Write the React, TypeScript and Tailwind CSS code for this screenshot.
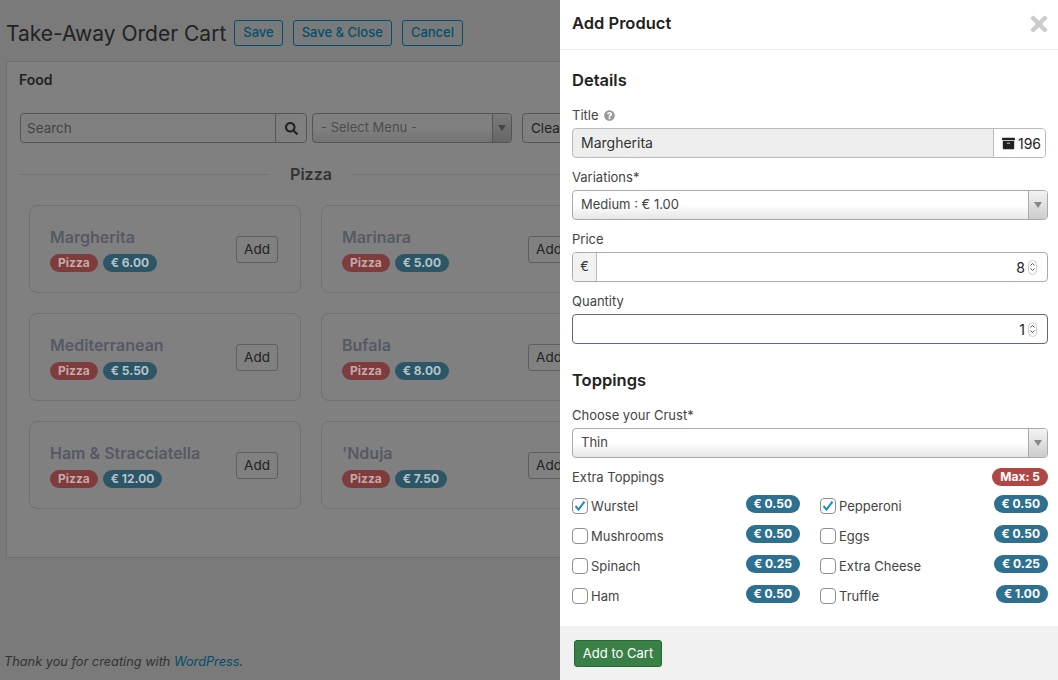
import { FaArchive, FaQuestionCircle, FaSearch, FaTimes } from "react-icons/fa";

const products = [
  { name: "Margherita", price: "€ 6.00" },
  { name: "Marinara", price: "€ 5.00" },
  { name: "Mediterranean", price: "€ 5.50" },
  { name: "Bufala", price: "€ 8.00" },
  { name: "Ham & Stracciatella", price: "€ 12.00" },
  { name: "'Nduja", price: "€ 7.50" },
];

const toppings = [
  { name: "Wurstel", price: "€ 0.50", checked: true },
  { name: "Pepperoni", price: "€ 0.50", checked: true },
  { name: "Mushrooms", price: "€ 0.50" },
  { name: "Eggs", price: "€ 0.50" },
  { name: "Spinach", price: "€ 0.25" },
  { name: "Extra Cheese", price: "€ 0.25" },
  { name: "Ham", price: "€ 0.50" },
  { name: "Truffle", price: "€ 1.00" },
];

function Badge({ color, children }: { color: string; children: React.ReactNode }) {
  return (
    <span className={`flex h-[18px] items-center rounded-full px-[8px] text-[12px] font-bold leading-none text-white ${color}`}>
      {children}
    </span>
  );
}

function SelectBox({ value }: { value: string }) {
  return (
    <div className="flex h-[30px] w-full items-stretch overflow-hidden rounded-[4px] border border-[#aaaaaa] bg-gradient-to-b from-white from-50% to-[#e6e6e6]">
      <span className="flex-1 self-center pl-[8px] text-[13px] text-[#444444]">{value}</span>
      <span className="flex w-[19px] items-center justify-center border-l border-[#aaaaaa] bg-gradient-to-b from-[#f4f4f4] to-[#cccccc]">
        <svg width="8" height="6" viewBox="0 0 8 6">
          <path d="M0 0h8L4 6z" fill="#888888" />
        </svg>
      </span>
    </div>
  );
}

function Spinner() {
  return (
    <span className="ml-[3px] flex h-[15px] w-[9px] flex-col items-center justify-center gap-[2px] rounded-full border border-[#cccccc]">
      <svg width="5" height="3" viewBox="0 0 5 3">
        <path d="M.5 2.5l2-2 2 2" fill="none" stroke="#555555" />
      </svg>
      <svg width="5" height="3" viewBox="0 0 5 3">
        <path d="M.5.5l2 2 2-2" fill="none" stroke="#555555" />
      </svg>
    </span>
  );
}

function Field({ label, children, className }: { label: React.ReactNode; children: React.ReactNode; className?: string }) {
  return (
    <div className={className}>
      <div className="mb-[4px] flex h-[17px] items-center text-[13px] leading-none text-[#444444]">{label}</div>
      {children}
    </div>
  );
}

function ProductCard({ name, price }: { name: string; price: string }) {
  return (
    <div className="flex h-[88px] items-center justify-between rounded-[8px] border border-[#707070] pl-[20px] pr-[22px]">
      <div>
        <div className="text-[16px] font-semibold leading-[20px] text-[#545a64]">{name}</div>
        <div className="mt-[7px] flex gap-[5px]">
          <Badge color="bg-[#7f3c3c]"><span className="text-[#c4a9a9]">Pizza</span></Badge>
          <Badge color="bg-[#2c5566]"><span className="text-[#b5c4ca]">{price}</span></Badge>
        </div>
      </div>
      <button className="h-[27px] w-[42px] rounded-[3px] border border-[#5f5f5f] text-[13.5px] text-[#222222]">Add</button>
    </div>
  );
}

function ToppingRow({ name, price, checked }: { name: string; price: string; checked?: boolean }) {
  return (
    <div className="flex h-[30px] items-start justify-between">
      <div className="mt-[8px] flex items-center gap-[3px]">
        <span className="flex h-[16px] w-[16px] items-center justify-center rounded-[4px] border border-[#8c8f94] bg-white">
          {checked && (
            <svg width="14" height="14" viewBox="0 0 14 14">
              <path d="M2.5 7l3 3.6 6-8" fill="none" stroke="#1e8cbe" strokeWidth="2" />
            </svg>
          )}
        </span>
        <span className="text-[13px] leading-none text-[#444444]">{name}</span>
      </div>
      <div className="mt-[5px]">
        <Badge color="bg-[#2e7090]">{price}</Badge>
      </div>
    </div>
  );
}

export default function App() {
  return (
    <div className="relative h-[680px] w-[1058px] overflow-hidden bg-[#7a7a7a] font-['Inter','Liberation_Sans',sans-serif]">
      {/* dimmed page behind the drawer */}
      <div className="w-[620px] pl-[6px] pt-[20px]">
        <div className="flex h-[26px] items-center">
          <h1 className="text-[21px] font-normal leading-none text-[#222222]">Take-Away Order Cart</h1>
          <div className="ml-[8px] flex gap-[10px]">
            {["Save", "Save & Close", "Cancel"].map((label) => (
              <button
                key={label}
                className="flex h-[26px] items-center rounded-[3px] border border-[#00506f] px-[8px] text-[13px] font-medium text-[#00506f]"
              >
                {label}
              </button>
            ))}
          </div>
        </div>
        <div className="mt-[15px] h-[497px] w-[610px] border border-[#707070] bg-[#808080] px-[13px] pt-[9px]">
          <div className="ml-[-1px] h-[17px] text-[14px] font-semibold leading-[17px] text-[#222222]">Food</div>
          <div className="mt-[25px] flex h-[30px]">
            <div className="flex w-[287px] overflow-hidden rounded-[4px] border border-[#555555]">
              <span className="flex-1 self-center pl-[6px] text-[13.5px] text-[#444444]">Search</span>
              <span className="flex w-[31px] items-center justify-center border-l border-[#555555] text-[#222222]">
                <FaSearch size={13} />
              </span>
            </div>
            <div className="ml-[5px] flex w-[200px] overflow-hidden rounded-[4px] border border-[#555555] bg-gradient-to-b from-[#808080] from-50% to-[#737373]">
              <span className="flex-1 self-center pl-[8px] text-[13px] text-[#4d4d4d]">- Select Menu -</span>
              <span className="flex w-[19px] items-center justify-center border-l border-[#555555] bg-gradient-to-b from-[#7a7a7a] to-[#666666]">
                <svg width="8" height="6" viewBox="0 0 8 6">
                  <path d="M0 0h8L4 6z" fill="#444444" />
                </svg>
              </span>
            </div>
            <button className="ml-[10px] rounded-[4px] border border-[#555555] px-[8px] text-[13.5px] text-[#222222]">Clear</button>
          </div>
          <div className="mt-[21px] flex h-[20px] items-center gap-[20px]">
            <span className="h-px flex-1 bg-[#747474]" />
            <span className="text-[16px] font-semibold leading-none text-[#333333]">Pizza</span>
            <span className="h-px flex-1 bg-[#747474]" />
          </div>
          <div className="ml-[9px] mt-[21px] grid w-[564px] grid-cols-2 gap-x-[20px] gap-y-[20px]">
            {products.map((p) => (
              <ProductCard key={p.name} name={p.name} price={p.price} />
            ))}
          </div>
        </div>
        <p className="ml-[-2px] mt-[95px] text-[12.75px] italic leading-[18px] text-[#333333]">
          Thank you for creating with <a className="text-[#004d6b]">WordPress</a>.
        </p>
      </div>
      <div className="absolute inset-0 backdrop-blur-[0.5px]" />

      {/* drawer */}
      <div className="absolute bottom-0 right-0 top-0 flex w-[498px] flex-col bg-white">
        <div className="flex h-[50px] items-center justify-between border-b border-[#eeeeee] pl-[12px] pr-[7px]">
          <h2 className="mb-[2px] text-[16.5px] font-semibold text-[#222222]">Add Product</h2>
          <FaTimes size={24} className="mb-[2px] text-[#cccccc]" />
        </div>
        <div className="flex-1 px-[12px] pr-[10px]">
          <h3 className="mt-[20px] h-[20px] text-[16.5px] font-semibold leading-[20px] text-[#222222]">Details</h3>
          <Field
            className="mt-[17px]"
            label={
              <>
                Title <FaQuestionCircle size={11} className="ml-[5px] text-[#999999]" />
              </>
            }
          >
            <div className="flex h-[30px] w-[474px] overflow-hidden rounded-[4px] border border-[#bbbbbb] bg-[#eeeeee]">
              <span className="mb-[1px] flex-1 self-center pl-[8px] text-[14px] text-[#333333]">Margherita</span>
              <span className="flex w-[52px] items-center justify-end gap-[3px] border-l border-[#bbbbbb] bg-white pr-[4px] text-[14px] text-[#222222]">
                <FaArchive size={13} /> 196
              </span>
            </div>
          </Field>
          <Field className="mt-[11px]" label="Variations*">
            <SelectBox value="Medium : € 1.00" />
          </Field>
          <Field className="mt-[11px]" label="Price">
            <div className="flex h-[30px] overflow-hidden rounded-[4px] border border-[#aaaaaa]">
              <span className="flex w-[24px] items-center justify-center border-r border-[#bbbbbb] bg-[#f2f2f2] text-[13px] text-[#333333]">€</span>
              <span className="flex flex-1 items-center justify-end pr-[10px] text-[14px] text-[#222222]">
                8<Spinner />
              </span>
            </div>
          </Field>
          <Field className="mt-[11px]" label="Quantity">
            <div className="flex h-[30px] items-center justify-end rounded-[4px] border border-[#5b6b7a] pr-[10px] text-[14px] text-[#222222]">
              1<Spinner />
            </div>
          </Field>
          <h3 className="mt-[26px] h-[20px] text-[16.5px] font-semibold leading-[20px] text-[#222222]">Toppings</h3>
          <Field className="mt-[17px]" label="Choose your Crust*">
            <SelectBox value="Thin" />
          </Field>
          <div className="mt-[10px] flex h-[18px] items-center justify-between text-[13px] text-[#444444]">
            <span className="mt-[2px]">Extra Toppings</span>
            <Badge color="bg-[#b04646]">Max: 5</Badge>
          </div>
          <div className="mt-[4px] grid grid-cols-2 gap-x-[20px]">
            {toppings.map((t) => (
              <ToppingRow key={t.name} name={t.name} price={t.price} checked={t.checked} />
            ))}
          </div>
        </div>
        <div className="flex h-[54px] items-center bg-[#f1f1f1] pl-[14px]">
          <button className="h-[27px] w-[88px] rounded-[3px] border border-[#1d6b2e] bg-[#3a8046] pt-[1px] text-[13px] text-white">Add to Cart</button>
        </div>
      </div>
    </div>
  );
}
